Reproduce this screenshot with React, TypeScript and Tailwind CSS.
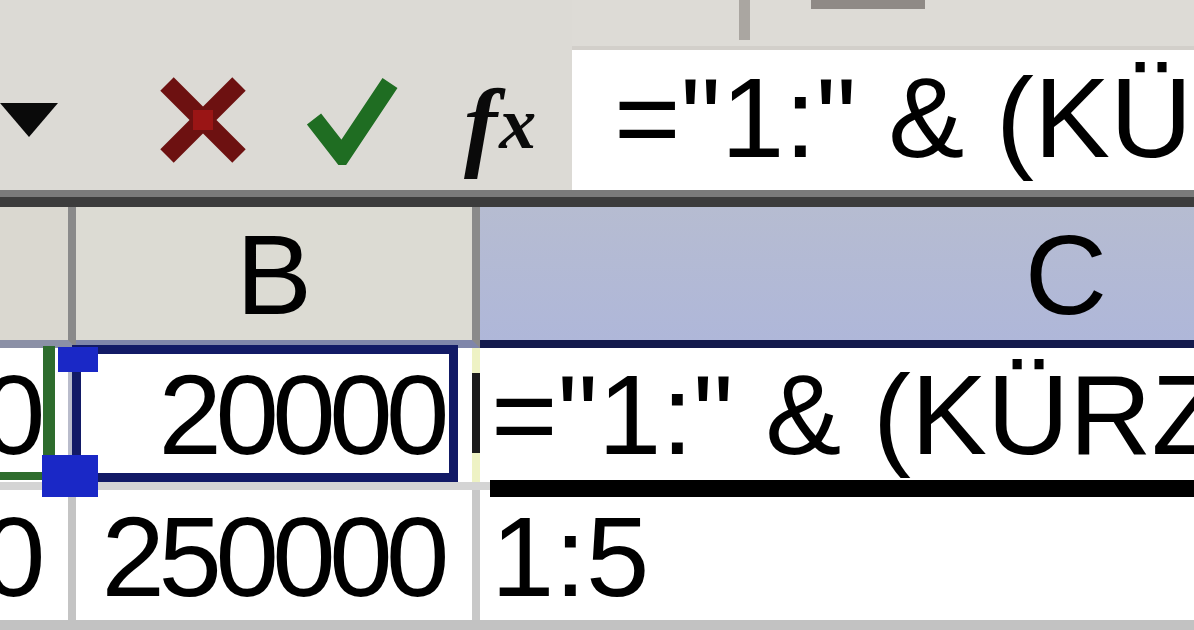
import React from "react";

// Name box arrow, cancel, enter and insert-function buttons, then the formula input
function FormulaBar() {
    return (
        <div className="flex h-[190px] bg-[#dcdad5]">
            <div className="flex w-[572px] shrink-0 items-center pt-[50px]">
                {/* name box dropdown arrow */}
                <svg width="58" height="34" viewBox="0 0 58 34" className="shrink-0">
                    <polygon points="0,0 58,0 29,34" fill="#0a0a0a" />
                </svg>

                {/* cancel */}
                <svg width="92" height="90" viewBox="0 0 92 90" className="ml-[99px] shrink-0">
                    <line x1="10" y1="9" x2="82" y2="81" stroke="#6d1111" strokeWidth="19" />
                    <line x1="82" y1="9" x2="10" y2="81" stroke="#6d1111" strokeWidth="19" />
                    <rect x="36" y="35" width="20" height="20" fill="#9a1515" />
                </svg>

                {/* enter */}
                <svg width="92" height="90" viewBox="0 0 92 90" className="ml-[57px] shrink-0">
                    <polyline
                        points="8,44 36,80 84,8"
                        fill="none"
                        stroke="#1f6d22"
                        strokeWidth="18"
                        strokeLinejoin="miter"
                    />
                </svg>

                {/* insert function */}
                <div className="ml-[66px] flex h-[90px] shrink-0 items-baseline font-['Liberation_Serif',serif] italic font-bold leading-none text-[#0a0a0a]">
                    <span className="text-[100px]">f</span>
                    <span className="ml-[2px] -translate-y-[10px] text-[74px]">x</span>
                </div>
            </div>

            <div className="flex min-w-0 flex-1 flex-col overflow-hidden">
                <div className="flex h-[50px] items-start border-b-[4px] border-[#d2cfca] bg-[#dddbd6]">
                    <div className="w-[167px] shrink-0" />
                    <div className="h-[40px] w-[11px] shrink-0 bg-[#aaa6a1]" />
                    <div className="w-[61px] shrink-0" />
                    <div className="h-[9px] w-[114px] shrink-0 bg-[#8f8a86]" />
                </div>
                <div className="h-[140px] bg-white pl-[42px] pt-[11px] text-[114px] leading-none whitespace-nowrap">
                    ="1:" &amp; (KÜRZEN(B1/A1;0))
                </div>
            </div>
        </div>
    );
}

function ColumnHeaders() {
    return (
        <div className="flex h-[141px] text-[114px] leading-none">
            <div className="w-[76px] shrink-0 border-r-[8px] border-b-[8px] border-r-[#8a8a8a] border-b-[#8b90a6] bg-[#dad8d0]" />
            <div className="w-[404px] shrink-0 border-r-[8px] border-b-[8px] border-r-[#8a8a8a] border-b-[#7f86aa] bg-[#dcdbd3] pt-[11px] text-center">
                B
            </div>
            <div className="w-[1172px] shrink-0 border-b-[8px] border-b-[#131a4d] bg-gradient-to-b from-[#b6bcd1] to-[#afb7d9] pt-[11px] text-center">
                C
            </div>
        </div>
    );
}

function NumberCell({ value, width, line }: { value: string; width: string; line: string }) {
    return (
        <div className={`flex shrink-0 justify-end overflow-hidden border-r-[8px] pr-[29px] pt-[10px] tracking-[-6.5px] ${width} ${line}`}>
            <span className="shrink-0">{value}</span>
        </div>
    );
}

function Rows() {
    return (
        <div className="text-[114px] leading-none whitespace-nowrap">
            {/* row 1: A1 and B1 are referenced by the formula, C1 is being edited */}
            <div className="relative flex h-[142px] border-b-[8px] border-[#d4d4d4]">
                <NumberCell value="100000" width="w-[76px]" line="border-[#b9bccb]" />
                <NumberCell value="20000" width="w-[404px]" line="border-[#eef2c4]" />
                <div className="flex-1 pl-[11px] pt-[10px]">="1:" &amp; (KÜRZEN(B1/A1;0))</div>

                {/* A1 reference outline */}
                <div className="absolute left-[-12px] top-[-2px] h-[134px] w-[67px] border-r-[12px] border-b-[8px] border-[#2e6c2d]" />
                {/* B1 reference outline and handles */}
                <div className="absolute left-[72px] top-[-3px] h-[137px] w-[386px] border-[9px] border-[#121a66]" />
                <div className="absolute left-[58px] top-[-1px] h-[25px] w-[40px] bg-[#1a28c6]" />
                <div className="absolute left-[42px] top-[107px] h-[42px] w-[56px] bg-[#1a28c6]" />
                {/* C1 cell cursor */}
                <div className="absolute left-[472px] top-[25px] h-[80px] w-[8px] bg-[#1c1c1c]" />
                <div className="absolute left-[490px] right-0 top-[132px] h-[17px] bg-black" />
            </div>

            {/* row 2 */}
            <div className="flex h-[140px] border-b-[10px] border-[#c2c2c2]">
                <NumberCell value="100000" width="w-[76px]" line="border-[#c4c4c4]" />
                <NumberCell value="250000" width="w-[404px]" line="border-[#c8c8c8]" />
                <div className="flex-1 pl-[11px] pt-[10px]">1:5</div>
            </div>
        </div>
    );
}

export default function App() {
    return (
        <div className="h-[630px] w-[1194px] overflow-hidden bg-white font-['Liberation_Sans',Arial,sans-serif] text-black">
            <FormulaBar />
            <div className="h-[17px] border-t-[7px] border-[#7a7a7a] bg-[#3c3c3c]" />
            <ColumnHeaders />
            <Rows />
        </div>
    );
}
